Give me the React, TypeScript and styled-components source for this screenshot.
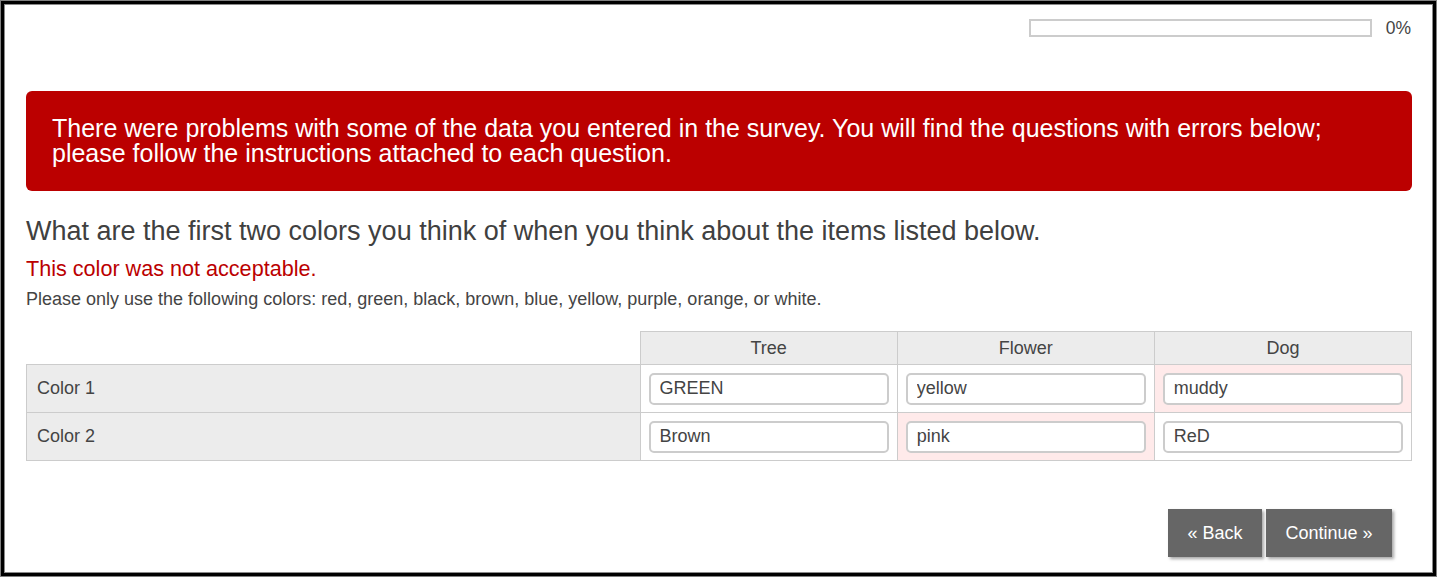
import styled, { createGlobalStyle } from "styled-components";

const GlobalStyle = createGlobalStyle`
  html, body {
    margin: 0;
    padding: 0;
    background: #fff;
  }

  body {
    font-family: "Liberation Sans", Arial, sans-serif;
    font-size: 18px;
    color: #444;
  }
`;

const Frame = styled.div`
  box-sizing: border-box;
  width: 1437px;
  height: 577px;
  border: 1px solid #808080;
  background: #000;
  padding: 3px;
`;

const Page = styled.main`
  box-sizing: border-box;
  height: 100%;
  background: #fff;
  box-shadow: inset 0 0 0 1px #8a8a8a;
  padding: 15px 21px 0 22px;
  display: flex;
  flex-direction: column;
`;

const ProgressRow = styled.div`
  height: 18px;
  display: flex;
  justify-content: flex-end;
  align-items: center;
  gap: 14px;
  padding-right: 1px;
`;

const ProgressTrack = styled.div`
  box-sizing: border-box;
  width: 343px;
  height: 18px;
  border: 2px solid #cccccc;
  background: #fff;
`;

const ProgressLabel = styled.span`
  font-size: 17.5px;
  line-height: 18px;
  color: #444;
`;

const ErrorAlert = styled.div`
  margin-top: 54px;
  background: #bb0000;
  border-radius: 6px;
  color: #fff;
  font-size: 25px;
  line-height: 25px;
  padding: 25px 26px;
`;

const QuestionTitle = styled.h2`
  margin: 25px 0 0;
  font-size: 27px;
  line-height: 30px;
  font-weight: normal;
  color: #404040;
`;

const ErrorText = styled.p`
  margin: 11px 0 0;
  font-size: 21.6px;
  line-height: 24px;
  color: #bb0000;
`;

const HelpText = styled.p`
  margin: 8px 0 0;
  font-size: 18px;
  line-height: 20px;
  color: #444;
`;

const Grid = styled.table`
  margin-top: 22px;
  width: 100%;
  border-collapse: collapse;
  table-layout: fixed;
  font-size: 18px;
  color: #444;
`;

const CornerCell = styled.th`
  width: 611px;
  border: none;
  border-bottom: 1px solid #cccccc;
`;

const HeadCell = styled.th`
  height: 32px;
  padding: 0;
  font-weight: normal;
  background: #ececec;
  border: 1px solid #cccccc;
  text-align: center;
`;

const RowLabel = styled.th`
  height: 47px;
  padding: 0 0 0 10px;
  font-weight: normal;
  text-align: left;
  background: #ececec;
  border: 1px solid #cccccc;
`;

const AnswerCell = styled.td<{ $invalid?: boolean }>`
  padding: 0 8px;
  background: ${({ $invalid }) => ($invalid ? "#ffeaea" : "#fff")};
  border: 1px solid #cccccc;
`;

const TextInput = styled.input`
  box-sizing: border-box;
  display: block;
  width: 100%;
  height: 32px;
  padding: 0 9px;
  border: 2px solid #cccccc;
  border-radius: 5px;
  background: #fff;
  font-family: "Liberation Sans", Arial, sans-serif;
  font-size: 18px;
  color: #444;
  outline: none;
`;

const NavBar = styled.div`
  margin-top: 48px;
  display: flex;
  justify-content: flex-end;
  gap: 4px;
  padding-right: 20px;
`;

const NavButton = styled.button`
  height: 48px;
  padding: 0 19.5px;
  border: none;
  background: #666666;
  color: #fff;
  font-family: "Liberation Sans", Arial, sans-serif;
  font-size: 18px;
  box-shadow: 2px 2px 3px rgba(0, 0, 0, 0.35);
  cursor: pointer;
`;

const items = ["Tree", "Flower", "Dog"];

const answers = [
  { label: "Color 1", values: ["GREEN", "yellow", "muddy"], invalid: [false, false, true] },
  { label: "Color 2", values: ["Brown", "pink", "ReD"], invalid: [false, true, false] },
];

const App = () => {
  return (
    <>
      <GlobalStyle />
      <Frame>
        <Page>
          <ProgressRow>
            <ProgressTrack />
            <ProgressLabel>0%</ProgressLabel>
          </ProgressRow>

          <ErrorAlert>
            There were problems with some of the data you entered in the survey. You will find the
            questions with errors below; please follow the instructions attached to each question.
          </ErrorAlert>

          <QuestionTitle>
            What are the first two colors you think of when you think about the items listed below.
          </QuestionTitle>
          <ErrorText>This color was not acceptable.</ErrorText>
          <HelpText>
            Please only use the following colors: red, green, black, brown, blue, yellow, purple,
            orange, or white.
          </HelpText>

          <Grid>
            <thead>
              <tr>
                <CornerCell />
                {items.map((item) => (
                  <HeadCell key={item}>{item}</HeadCell>
                ))}
              </tr>
            </thead>
            <tbody>
              {answers.map((row) => (
                <tr key={row.label}>
                  <RowLabel>{row.label}</RowLabel>
                  {row.values.map((value, i) => (
                    <AnswerCell key={items[i]} $invalid={row.invalid[i]}>
                      <TextInput type="text" defaultValue={value} />
                    </AnswerCell>
                  ))}
                </tr>
              ))}
            </tbody>
          </Grid>

          <NavBar>
            <NavButton type="button">« Back</NavButton>
            <NavButton type="button">Continue »</NavButton>
          </NavBar>
        </Page>
      </Frame>
    </>
  );
};

export default App;
